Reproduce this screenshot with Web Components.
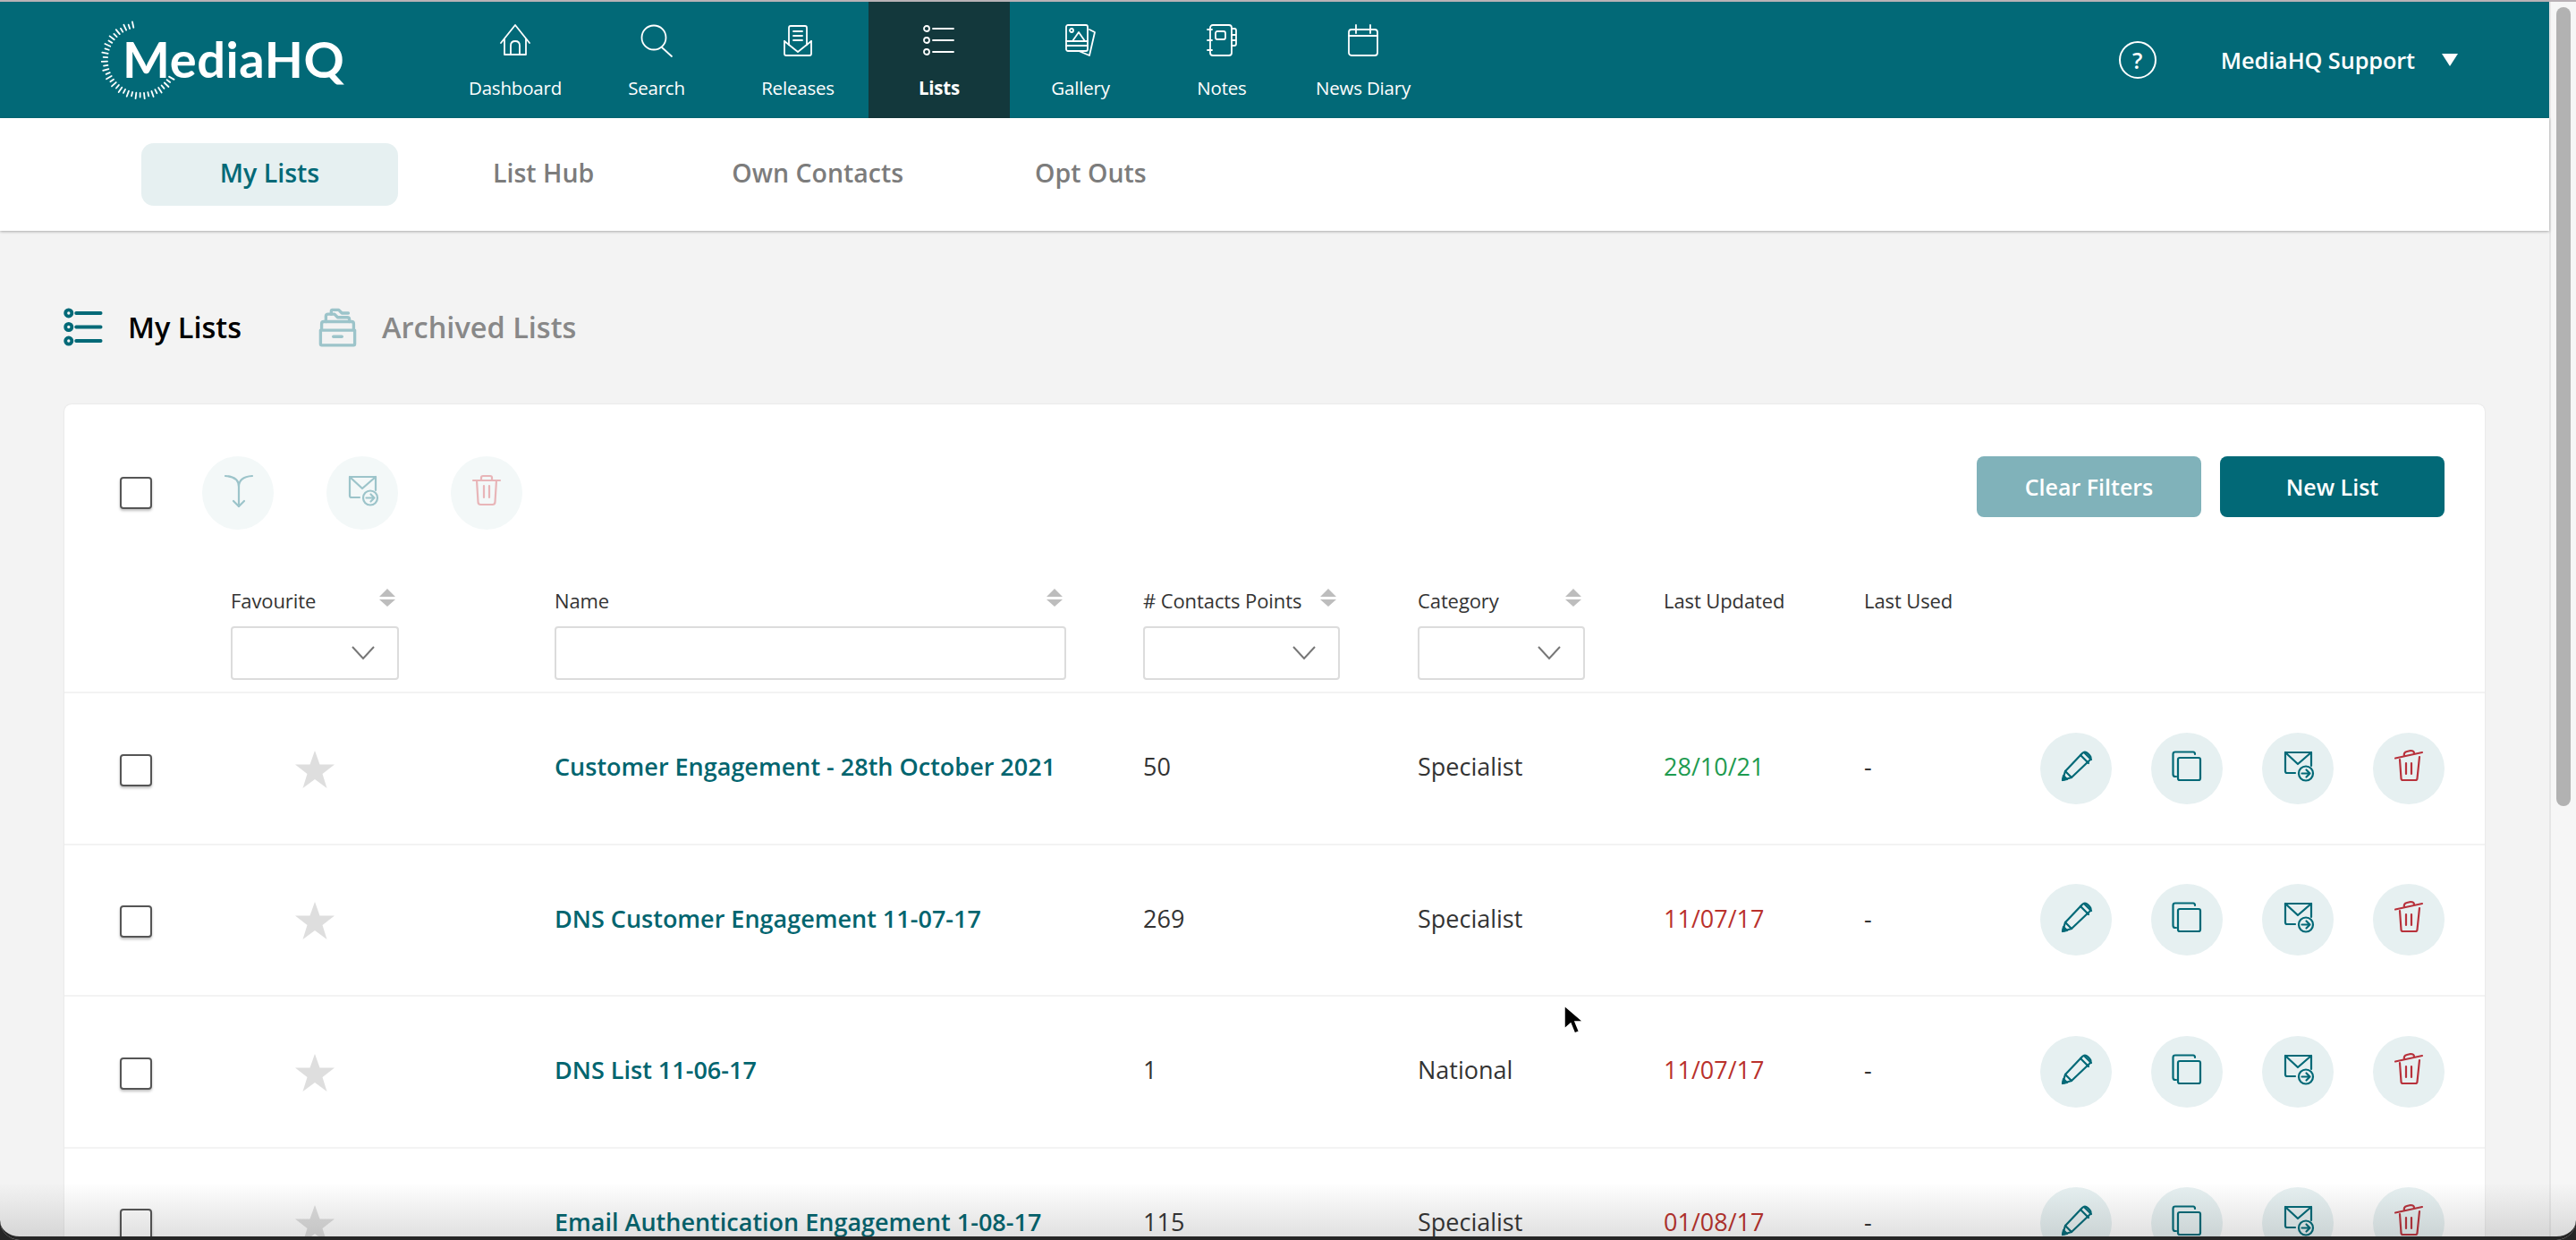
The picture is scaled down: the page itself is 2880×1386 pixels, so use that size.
<!DOCTYPE html>
<html lang="en">
<head>
<meta charset="utf-8">
<title>MediaHQ - My Lists</title>
<style>
  html, body { margin: 0; height: 1386px; overflow: hidden; background: #f3f3f3; }
  body { font-family: "Open Sans", "Liberation Sans", sans-serif; color: #333; }
</style>
</head>
<body>
<mhq-app></mhq-app>

<script>
// All icons are drawn on a 36 x 36 box, stroke colour comes from currentColor
const ICONS = {
  home: '<path d="M2 21 18 1l16 20"/><path d="M6 17v17h24V17"/><path d="M13 34V24q0-5 5-5t5 5v10"/>',
  search: '<circle cx="15" cy="15" r="13.5"/><path d="m24 26 11 10"/>',
  releases: '<path d="M3 19v14q0 2 2 2h26q2 0 2-2V19"/><path d="M8 23V4q0-2 2-2h16q2 0 2 2v19"/><path d="M13 8h10M13 13h10M13 18h10"/><path d="m3 19 15 12 15-12"/>',
  lists: '<circle cx="4" cy="5" r="3"/><circle cx="4" cy="18" r="3"/><circle cx="4" cy="31" r="3"/><path d="M11 5h23M11 18h23M11 31h23"/>',
  gallery: '<rect x="2" y="1" width="24" height="29" rx="2"/><circle cx="8" cy="7" r="2"/><path d="m9 19 7-10 7 10z"/><path d="M2 19h24M2 24h24"/><path d="m28 6 6 3-6 26-12-5"/>',
  notes: '<rect x="5" y="1" width="24" height="34" rx="3"/><rect x="11" y="8" width="11" height="9" rx="2"/><path d="M2 6h5M2 18h5M2 29h5"/><path d="M29 5h3q2 0 2 2v15q0 2-2 2h-3M29 12h5M29 18h5"/>',
  diary: '<rect x="2" y="6" width="32" height="29" rx="3"/><path d="M2 13h32M10 1v9M26 1v9"/>',
  pencil: '<path d="M3 34 6 24 25 4q3-3 6 0l2 2q3 3 0 6L13 31z"/><path d="m6 24 7 7M23 6l9 9M27 3l8 8"/><path d="m3 34 1-5 4 4z" fill="currentColor"/>',
  copy: '<path d="M6 30H5q-2.500 0-2.500-2.500V5Q2.500 2.500 5 2.500h20q2 0 2 2.500"/><rect x="8" y="9" width="25" height="25" rx="2"/>',
  mail: '<path d="M15 26H6q-2 0-2-2V3h29v15"/><path d="m4 3 14 13L33 3"/><circle cx="27" cy="26.500" r="8"/><path d="M22.500 26.500h9M27.500 22.500l4 4-4 4"/>',
  trash: '<path d="M3 9.500 33 3"/><path d="M13 7q-1-4 3-5l4-1q4 0 4 3"/><path d="m8 11 1.500 21q0 2 2 2h14q2 0 2-2L30 8"/><path d="M15 15v12M21 15v12"/>',
  trashFlat: '<path d="M3 7h30"/><path d="M12 7V4q0-2 2-2h8q2 0 2 2v3"/><path d="m7 7 1.500 24q0 3 3 3h13q3 0 3-3L29 7"/><path d="M15 13v13M21 13v13"/>',
  merge: '<path d="M19 36V14Q19 3 4 2"/><path d="M19 14q0-11 15-12"/><path d="m13 30 6 6 6-6"/>',
  archive: '<path d="M3 20v-5q0-2 2-2h26q2 0 2 2v5"/><path d="M2 21h32v13q0 1-1 1H3q-1 0-1-1z"/><path d="M7 13V8q0-2 2-2h6l3 3h9q2 0 2 2v2"/><path d="M12 6V3q0-1 1-1h6l3 3h6"/><path d="M14 27h8"/>'
};

class MhqIcon extends HTMLElement {
  connectedCallback() {
    const size = this.getAttribute('size') || 36;
    const weight = this.getAttribute('weight') || 2.2;
    this.attachShadow({ mode: 'open' }).innerHTML = `
      <style>
        :host { display: block; flex: none; width: ${size}px; height: ${size}px; }
        svg { display: block; width: 100%; height: 100%; overflow: visible; }
      </style>
      <svg viewBox="0 0 36 36" fill="none" stroke="currentColor" stroke-width="${weight}"
           stroke-linecap="round" stroke-linejoin="round">${ICONS[this.getAttribute('name')]}</svg>`;
  }
}

class MhqLogo extends HTMLElement {
  connectedCallback() {
    // dashes of the ring, open on the right where the wordmark sits
    let dashes = '';
    for (let i = 0; i <= 34; i++) {
      const a = (348 - i * 6.7) * Math.PI / 180;
      const inner = 37;
      const outer = i % 2 ? 41.500 : 43.500;
      dashes += `<line x1="${44 + inner * Math.sin(a)}" y1="${44 - inner * Math.cos(a)}"
                       x2="${44 + outer * Math.sin(a)}" y2="${44 - outer * Math.cos(a)}"/>`;
    }
    this.attachShadow({ mode: 'open' }).innerHTML = `
      <style>
        :host { display: flex; align-items: center; width: 382px; padding-left: 115px; position: relative; }
        svg { position: absolute; left: 113px; top: 21px; width: 88px; height: 88px; }
        span {
          margin-left: 22px; margin-top: -2px;
          font: 700 56px/1 Lato, "Open Sans", sans-serif; color: #fff; letter-spacing: .6px;
        }
      </style>
      <svg viewBox="0 0 88 88" stroke="#fff" stroke-width="1.800" stroke-linecap="round">${dashes}</svg>
      <span>MediaHQ</span>`;
  }
}

class NavItem extends HTMLElement {
  connectedCallback() {
    this.attachShadow({ mode: 'open' }).innerHTML = `
      <style>
        :host {
          display: flex; flex-direction: column; align-items: center;
          width: 158px; height: 130px; box-sizing: border-box; padding-top: 25px;
          color: #fff; font-size: 20.500px;
        }
        :host([active]) { background: #13383c; font-weight: 700; }
        span { margin-top: 20px; line-height: 30px; white-space: nowrap; letter-spacing: -.2px; }
      </style>
      <mhq-icon name="${this.getAttribute('icon')}" weight="1.800"></mhq-icon>
      <span><slot></slot></span>`;
  }
}

class AppHeader extends HTMLElement {
  connectedCallback() {
    const items = [['home', 'Dashboard'], ['search', 'Search'], ['releases', 'Releases'], ['lists', 'Lists'],
      ['gallery', 'Gallery'], ['notes', 'Notes'], ['diary', 'News Diary']];
    this.attachShadow({ mode: 'open' }).innerHTML = `
      <style>
        :host {
          display: flex; height: 130px; background: #026977; color: #fff;
          border-top: 2px solid #b9b2b6;
        }
        .right { margin-left: auto; display: flex; align-items: center; padding-right: 102px; }
        .help {
          width: 42px; height: 42px; box-sizing: border-box; border: 2px solid #fff; border-radius: 50%;
          display: flex; align-items: center; justify-content: center;
          font-size: 25px; font-weight: 600; margin-right: 72px;
        }
        .user { font-size: 25.300px; font-weight: 600; letter-spacing: -.1px; }
        .caret {
          width: 0; height: 0; margin-left: 30px;
          border-left: 9px solid transparent; border-right: 9px solid transparent; border-top: 14px solid #fff;
        }
      </style>
      <mhq-logo></mhq-logo>
      ${items.map(([icon, label]) => `<nav-item icon="${icon}" ${label === 'Lists' ? 'active' : ''}>${label}</nav-item>`).join('')}
      <div class="right">
        <div class="help">?</div>
        <div class="user">MediaHQ Support</div>
        <div class="caret"></div>
      </div>`;
  }
}

class SubTabs extends HTMLElement {
  connectedCallback() {
    this.attachShadow({ mode: 'open' }).innerHTML = `
      <style>
        :host {
          display: flex; align-items: center; height: 126px; padding-left: 158px;
          background: #fff; box-shadow: 0 1px 3px rgba(0,0,0,.3);
          font-size: 28.500px; font-weight: 600; color: #7c7c7c; position: relative;
        }
        div { padding: 0 76px; line-height: 64px; white-space: nowrap; margin-top: -4px; }
        .own { margin-left: 2px; }
        .opt { margin-left: -5px; }
        .active {
          width: 287px; box-sizing: border-box; padding: 0; margin-right: 30px; line-height: 70px; margin-top: 0; text-align: center;
          background: #e6f0f1; color: #026977; border-radius: 14px;
        }
        .active span { position: relative; top: -2px; }
      </style>
      <div class="active"><span>My Lists</span></div>
      <div>List Hub</div>
      <div class="own">Own Contacts</div>
      <div class="opt">Opt Outs</div>`;
  }
}

class PageTitle extends HTMLElement {
  connectedCallback() {
    this.attachShadow({ mode: 'open' }).innerHTML = `
      <style>
        :host {
          display: flex; align-items: center; height: 194px; box-sizing: border-box; padding-top: 20px;
          font-size: 32.500px; font-weight: 600;
        }
        .tab { display: flex; align-items: center; gap: 28px; }
        .on { color: #000; margin-right: 86px; }
        .on mhq-icon { color: #026977; }
        .off { color: #888; }
        .off mhq-icon { color: #9cc4ca; }
      </style>
      <div class="tab on"><mhq-icon name="lists" size="43" weight="3.200"></mhq-icon>My Lists</div>
      <div class="tab off"><mhq-icon name="archive" size="43" weight="2.800"></mhq-icon>Archived Lists</div>`;
  }
}

class CheckBox extends HTMLElement {
  connectedCallback() {
    this.attachShadow({ mode: 'open' }).innerHTML = `
      <style>
        :host {
          display: block; flex: none; width: 36px; height: 36px; box-sizing: border-box;
          background: #fff; border: 2px solid #555; border-radius: 4px;
          box-shadow: 0 2px 3px rgba(0,0,0,.25);
        }
      </style>`;
  }
}

class RoundButton extends HTMLElement {
  connectedCallback() {
    this.attachShadow({ mode: 'open' }).innerHTML = `
      <style>
        :host {
          display: flex; flex: none; align-items: center; justify-content: center;
          width: 80px; height: 80px; border-radius: 50%; padding-bottom: 6px; box-sizing: border-box;
          background: #e6f0f1; color: #026977;
        }
        :host([danger]) { color: #b8323c; }
        :host([faded]) { background: #f3f8f8; color: #9cc4ca; }
        :host([faded][danger]) { color: #e8b5b8; }
      </style>
      <mhq-icon name="${this.getAttribute('icon')}" size="${this.getAttribute('size') || 36}"></mhq-icon>`;
  }
}

class SortArrows extends HTMLElement {
  connectedCallback() {
    this.attachShadow({ mode: 'open' }).innerHTML = `
      <style>
        :host { display: block; width: 18px; height: 20px; margin-right: 4px; }
        svg { display: block; }
      </style>
      <svg width="18" height="20" viewBox="0 0 18 20" fill="#bdbdbd"><path d="M9 0 18 9H0zM0 12h18l-9 8z"/></svg>`;
  }
}

class FilterBox extends HTMLElement {
  connectedCallback() {
    const chevron = this.hasAttribute('plain') ? '' :
      `<svg width="26" height="16" viewBox="0 0 26 16" fill="none" stroke="#777" stroke-width="2"><path d="m1 1 12 13L25 1"/></svg>`;
    this.attachShadow({ mode: 'open' }).innerHTML = `
      <style>
        :host {
          display: flex; align-items: center; justify-content: flex-end;
          height: 60px; box-sizing: border-box; padding-right: 25px;
          background: #fff; border: 2px solid #dcdcdc; border-radius: 4px;
        }
      </style>
      ${chevron}`;
  }
}

class ListToolbar extends HTMLElement {
  connectedCallback() {
    this.attachShadow({ mode: 'open' }).innerHTML = `
      <style>
        :host { display: flex; align-items: flex-start; height: 82px; padding: 0 45px 0 62px; }
        check-box { margin: 23px 56px 0 0; }
        round-button { width: 80px; height: 82px; margin-right: 59px; }
        .gap { flex: 1; }
        .btn {
          height: 68px; line-height: 68px; width: 251px; text-align: center; border-radius: 8px;
          color: #fff; font-size: 25px; font-weight: 600;
        }
        .clear { background: #80b2ba; margin-right: 21px; }
        .new { background: #026977; }
      </style>
      <check-box></check-box>
      <round-button faded icon="merge"></round-button>
      <round-button faded icon="mail"></round-button>
      <round-button faded danger icon="trashFlat"></round-button>
      <div class="gap"></div>
      <div class="btn clear">Clear Filters</div>
      <div class="btn new">New List</div>`;
  }
}

// Shared column widths of head and rows
const COLUMNS = '186px 362px 658px 307px 275px 224px 197px 1fr';

class ListHead extends HTMLElement {
  connectedCallback() {
    const filtered = (label, width, plain) => `
      <div class="cell" style="width:${width}px">
        <div class="label">${label}<sort-arrows></sort-arrows></div>
        <filter-box ${plain ? 'plain' : ''}></filter-box>
      </div>`;
    this.attachShadow({ mode: 'open' }).innerHTML = `
      <style>
        :host {
          display: grid; grid-template-columns: ${COLUMNS};
          padding-top: 60px; height: 121px;
          border-bottom: 2px solid #f3f3f3; font-size: 22px; color: #333;
        }
        .label {
          display: flex; justify-content: space-between; align-items: flex-start;
          height: 48px; line-height: 38px; white-space: nowrap; letter-spacing: -.1px;
        }
        sort-arrows { margin-top: 6px; }
      </style>
      <div></div>
      ${filtered('Favourite', 188)}
      ${filtered('Name', 572, true)}
      ${filtered('# Contacts Points', 220)}
      ${filtered('Category', 187)}
      <div class="label">Last Updated</div>
      <div class="label">Last Used</div>`;
  }
}

class ListRow extends HTMLElement {
  connectedCallback() {
    const a = name => this.getAttribute(name);
    this.attachShadow({ mode: 'open' }).innerHTML = `
      <style>
        :host {
          display: grid; grid-template-columns: ${COLUMNS}; align-items: center;
          height: 169.500px; box-sizing: border-box; border-bottom: 2px solid #f3f3f3;
          font-size: 27px; color: #333;
        }
        check-box { margin-left: 62px; margin-top: 4px; }
        .star { width: 188px; display: flex; justify-content: center; margin-top: 2px; }
        .name { color: #02656f; font-weight: 600; white-space: nowrap; margin-top: -4px; }
        .val { margin-top: -4px; }
        .recent { color: #1e9b50; }
        .old { color: #b9312c; }
        .actions { display: flex; justify-content: flex-end; gap: 44px; padding-right: 45px; }
      </style>
      <check-box></check-box>
      <div class="star">
        <svg width="44" height="42" viewBox="0 0 44 42" fill="#dedede"><path d="m22 0 5.500 15.500H44L30.500 26 35.500 42 22 32 8.500 42l5-16L0 15.500h16.500z"/></svg>
      </div>
      <div class="name">${a('name')}</div>
      <div class="val">${a('points')}</div>
      <div class="val">${a('category')}</div>
      <div class="val ${a('age')}">${a('updated')}</div>
      <div class="val">-</div>
      <div class="actions">
        <round-button icon="pencil"></round-button>
        <round-button icon="copy"></round-button>
        <round-button icon="mail"></round-button>
        <round-button danger icon="trash"></round-button>
      </div>`;
  }
}

class ListCard extends HTMLElement {
  connectedCallback() {
    const rows = [
      ['Customer Engagement - 28th October 2021', '50', 'Specialist', '28/10/21', 'recent'],
      ['DNS Customer Engagement 11-07-17', '269', 'Specialist', '11/07/17', 'old'],
      ['DNS List 11-06-17', '1', 'National', '11/07/17', 'old'],
      ['Email Authentication Engagement 1-08-17', '115', 'Specialist', '01/08/17', 'old']
    ];
    this.attachShadow({ mode: 'open' }).innerHTML = `
      <style>
        :host {
          display: block; background: #fff; border-radius: 8px 8px 0 0; padding-top: 58px;
          box-shadow: 0 0 2px rgba(0,0,0,.12);
        }
      </style>
      <list-toolbar></list-toolbar>
      <list-head></list-head>
      ${rows.map(([name, points, category, updated, age]) => `
        <list-row name="${name}" points="${points}" category="${category}" updated="${updated}" age="${age}"></list-row>`).join('')}`;
  }
}

class ScrollRail extends HTMLElement {
  connectedCallback() {
    this.attachShadow({ mode: 'open' }).innerHTML = `
      <style>
        :host {
          display: block; width: 30px; box-sizing: border-box; height: 100%;
          background: #f6f6f6; border-left: 2px solid #e6e6e6; padding: 8px 6px 0 6px;
        }
        div { height: 893px; background: #b2b2b2; border-radius: 8px; }
      </style>
      <div></div>`;
  }
}

// Window edge of the recording: shaded bottom, dark rounded strip, and the mouse pointer
class WindowEdge extends HTMLElement {
  connectedCallback() {
    this.attachShadow({ mode: 'open' }).innerHTML = `
      <style>
        :host { position: absolute; inset: 0; overflow: hidden; pointer-events: none; display: block; }
        .shade {
          position: absolute; left: 0; right: 0; bottom: 4px; height: 60px;
          background: linear-gradient(rgba(40,40,40,0), rgba(40,40,40,.14));
        }
        .frame {
          position: absolute; inset: 0 0 0 0; box-sizing: border-box;
          border-bottom: 4px solid #262626; border-radius: 0 0 22px 22px;
          box-shadow: 0 0 0 30px #262626;
        }
        .top { position: absolute; left: 0; right: 0; top: -30px; height: 32px; background: #b9b2b6; }
        svg { position: absolute; left: 1747px; top: 1122px; }
      </style>
      <div class="shade"></div>
      <div class="frame"></div>
      <div class="top"></div>
      <svg width="24" height="36" viewBox="0 0 24 36">
        <path d="M2 2v26l7-6 4.500 11 5-2L14 20h9z" fill="#000" stroke="#fff" stroke-width="1.500"/>
      </svg>`;
  }
}

class MhqApp extends HTMLElement {
  connectedCallback() {
    this.attachShadow({ mode: 'open' }).innerHTML = `
      <style>
        :host { display: flex; height: 1386px; position: relative; overflow: hidden; }
        .main { width: 2850px; flex: none; }
        .content { padding: 0 72px; }
      </style>
      <div class="main">
        <app-header></app-header>
        <sub-tabs></sub-tabs>
        <div class="content">
          <page-title></page-title>
          <list-card></list-card>
        </div>
      </div>
      <scroll-rail></scroll-rail>
      <window-edge></window-edge>`;
  }
}

customElements.define('mhq-icon', MhqIcon);
customElements.define('mhq-logo', MhqLogo);
customElements.define('nav-item', NavItem);
customElements.define('app-header', AppHeader);
customElements.define('sub-tabs', SubTabs);
customElements.define('page-title', PageTitle);
customElements.define('check-box', CheckBox);
customElements.define('round-button', RoundButton);
customElements.define('sort-arrows', SortArrows);
customElements.define('filter-box', FilterBox);
customElements.define('list-toolbar', ListToolbar);
customElements.define('list-head', ListHead);
customElements.define('list-row', ListRow);
customElements.define('list-card', ListCard);
customElements.define('scroll-rail', ScrollRail);
customElements.define('window-edge', WindowEdge);
customElements.define('mhq-app', MhqApp);
</script>
</body>
</html>
